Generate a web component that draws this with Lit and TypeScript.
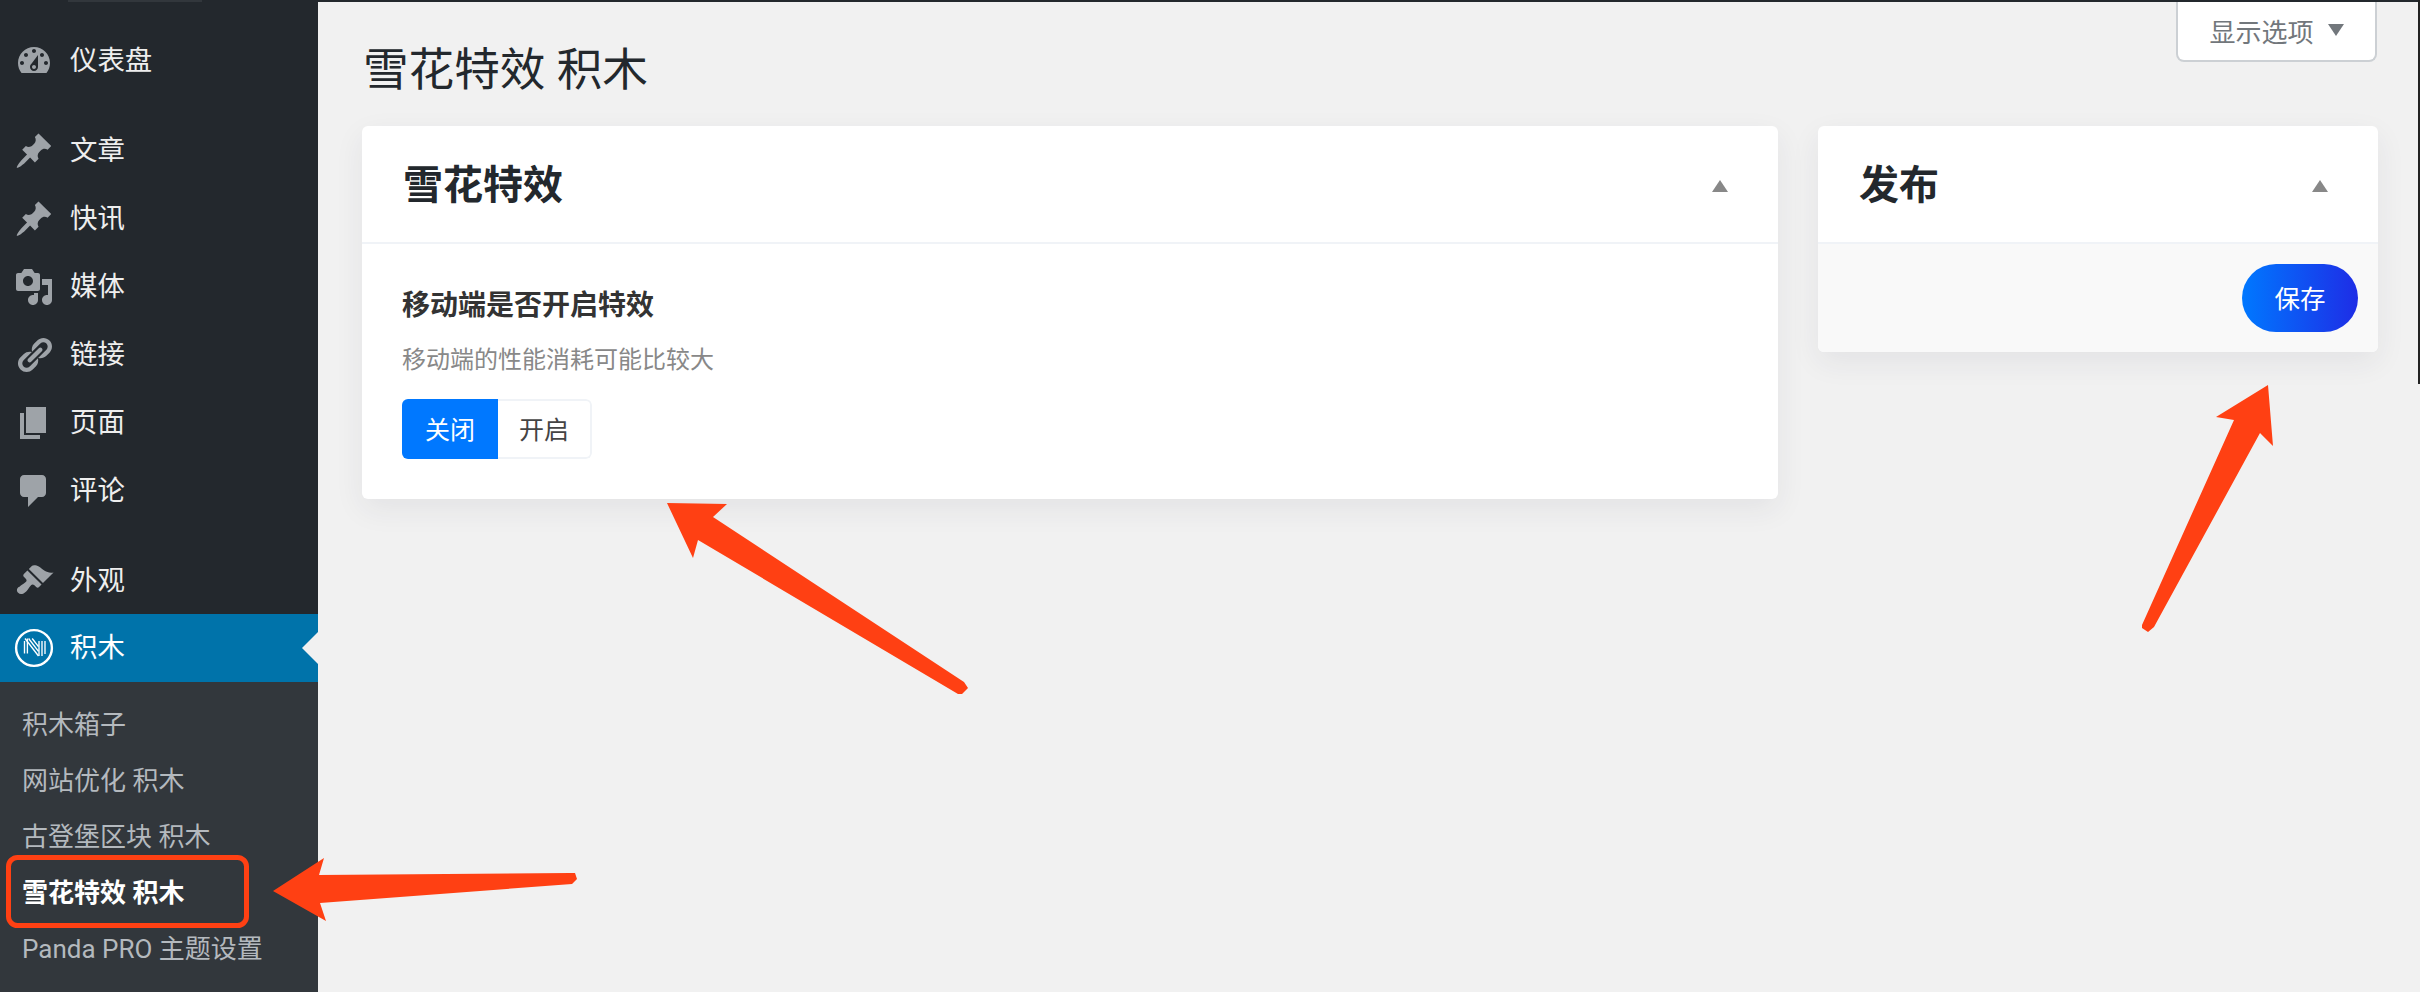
import { LitElement, html, css, svg } from "lit";
import { customElement } from "lit/decorators.js";

const ICONS: Record<string, string> = {
  dashboard: "M3.76 16h12.48c1.1-1.37 1.76-3.11 1.76-5 0-4.42-3.58-8-8-8s-8 3.58-8 8c0 1.89.66 3.63 1.76 5zM10 4c.55 0 1 .45 1 1s-.45 1-1 1-1-.45-1-1 .45-1 1-1zM6 6c.55 0 1 .45 1 1s-.45 1-1 1-1-.45-1-1 .45-1 1-1zm8 0c.55 0 1 .45 1 1s-.45 1-1 1-1-.45-1-1 .45-1 1-1zm-5.37 5.55L12 7v6c0 1.1-.9 2-2 2s-2-.9-2-2c0-.57.24-1.08.63-1.45zM4 10c.55 0 1 .45 1 1s-.45 1-1 1-1-.45-1-1 .45-1 1-1zm12 0c.55 0 1 .45 1 1s-.45 1-1 1-1-.45-1-1 .45-1 1-1zm-5 3c0-.55-.45-1-1-1s-1 .45-1 1 .45 1 1 1 1-.45 1-1z",
  pin: "M10.44 3.02l1.82-1.82 6.36 6.35-1.83 1.82c-1.05-.68-2.48-.57-3.41.36l-.75.75c-.92.93-1.04 2.35-.35 3.41l-1.83 1.82-2.41-2.41-2.8 2.79c-.42.42-3.38 2.71-3.8 2.29s1.86-3.39 2.28-3.81l2.79-2.79L4.1 9.36l1.83-1.82c1.05.69 2.48.57 3.4-.36l.75-.75c.93-.92 1.05-2.35.36-3.41z",
  media: "M13 11V4c0-.55-.45-1-1-1h-1.67L9 1H5L3.67 3H2c-.55 0-1 .45-1 1v7c0 .55.45 1 1 1h10c.55 0 1-.45 1-1zM7 4.5c1.38 0 2.5 1.12 2.5 2.5S8.38 9.5 7 9.5 4.5 8.38 4.5 7 5.62 4.5 7 4.5zM14 6h5v10.5c0 1.38-1.12 2.5-2.5 2.5S14 17.88 14 16.5s1.12-2.5 2.5-2.5c.17 0 .34.02.5.05V9h-3V6zm-4 8.05V13h2v3.5c0 1.38-1.12 2.5-2.5 2.5S7 17.88 7 16.5 8.12 14 9.5 14c.17 0 .34.02.5.05z",
  links: "M17.74 2.76c1.68 1.69 1.68 4.41 0 6.1l-1.53 1.52c-1.12 1.12-2.7 1.47-4.14 1.09l2.62-2.61.76-.77.76-.76c.84-.84.84-2.2 0-3.04-.84-.85-2.2-.85-3.04 0l-.77.76-3.38 3.38c-.37-1.44-.02-3.02 1.1-4.14l1.52-1.53c1.69-1.68 4.42-1.68 6.1 0zM8.59 13.43l5.34-5.34c.42-.42.42-1.1 0-1.52-.44-.43-1.13-.39-1.53 0l-5.33 5.34c-.42.42-.42 1.1 0 1.52.44.43 1.13.39 1.52 0zm-.76 2.29l4.14-4.15c.38 1.44.03 3.02-1.09 4.14l-1.52 1.53c-1.69 1.68-4.41 1.68-6.1 0-1.68-1.68-1.68-4.42 0-6.1l1.53-1.52c1.12-1.12 2.7-1.47 4.14-1.1l-4.14 4.15c-.85.84-.85 2.2 0 3.05.84.84 2.2.84 3.04 0z",
  page: "M6 15V2h10v13H6zm-1 1h8v2H3V5h2v11z",
  comments: "M5 2h9c1.1 0 2 .9 2 2v7c0 1.1-.9 2-2 2h-2l-5 5v-5H5c-1.1 0-2-.9-2-2V4c0-1.1.9-2 2-2z",
  appearance: "M14.48 11.06L7.41 3.99l1.5-1.5c.5-.56 2.3-.47 3.51.32 1.21.8 1.43 1.28 2.91 2.1 1.18.64 2.45 1.26 4.45.85zm-.71.71L6.7 4.7 4.93 6.47c-.39.39-.39 1.02 0 1.41l1.06 1.06c.39.39.39 1.03 0 1.42-.6.6-1.43 1.11-2.21 1.69-.35.26-.7.53-1.01.84C1.43 13.23 1 14.87 2.06 15.93s2.7.63 4.04-.71c.31-.31.58-.66.84-1.01.58-.78 1.09-1.61 1.69-2.21.39-.39 1.03-.39 1.42 0l1.06 1.06c.39.39 1.02.39 1.41 0z",
};

type Item = { label: string; icon: string };
const GROUP_A: Item[] = [{ label: "仪表盘", icon: "dashboard" }];
const GROUP_B: Item[] = [
  { label: "文章", icon: "pin" },
  { label: "快讯", icon: "pin" },
  { label: "媒体", icon: "media" },
  { label: "链接", icon: "links" },
  { label: "页面", icon: "page" },
  { label: "评论", icon: "comments" },
];
const GROUP_C: Item[] = [{ label: "外观", icon: "appearance" }];
const SUB = ["积木箱子", "网站优化 积木", "古登堡区块 积木", "雪花特效 积木", "Panda PRO 主题设置"];

const dash = (name: string) =>
  html`<svg class="ico" viewBox="0 0 20 20" aria-hidden="true"><path d=${ICONS[name]}></path></svg>`;

const logo = html`<svg class="ico" viewBox="0 0 40 40" aria-hidden="true">
  <circle cx="20" cy="20" r="17.9" fill="none" stroke="#fff" stroke-width="2.4"></circle>
  <g fill="none" stroke="#fff" stroke-width="1.35">
    <path d="M10.5 13v12.5M13.4 10.5v15"></path>
    <path d="M11 10.5l13.5 17.5M14.6 10.5l9.9 12.8M18.2 10.5l6.3 8.2"></path>
    <path d="M25 13v15M28 13v15M31 13v13"></path>
  </g>
</svg>`;

const arrows = svg`
  <polygon points="273,891 324,858 319,875 570,873 575,873 577,879 572,884 320,903 326,921"></polygon>
  <polygon points="667,503 727,504 713,517 964,682 968,688 962,694 958,694 698,540 693,558"></polygon>
  <polygon points="2268,385 2273,446 2260,433 2154,627 2148,632 2142,628 2142,625 2234,420 2216,417"></polygon>
  <rect x="8.5" y="857.5" width="238" height="68" rx="9" fill="none" stroke="#ff4013" stroke-width="5"></rect>
`;

@customElement("app-root")
export class AppRoot extends LitElement {
  static styles = css`
    :host {
      display: block;
      position: relative;
      width: 2420px;
      height: 992px;
      overflow: hidden;
      background: #f1f1f1;
      font-family: Roboto, "Noto Sans CJK SC", sans-serif;
      color: #23282d;
    }
    .layout { display: flex; height: 100%; }

    .side {
      width: 318px;
      flex: none;
      display: flex;
      flex-direction: column;
      background: #23282d;
      position: relative;
    }
    .side-top {
      width: 134px;
      height: 2px;
      margin-left: 68px;
      background: #32373c;
    }
    .menu { display: flex; flex-direction: column; }
    .m1 { margin-top: 25px; }
    .m2 { margin-top: 22px; }
    .m3 { margin-top: 22px; }
    .m3 .item { height: 67px; }
    .item {
      height: 68px;
      display: flex;
      align-items: center;
      color: #eee;
      font-size: 27.4px;
      line-height: 68px;
    }
    .item .ico {
      width: 40px;
      height: 40px;
      margin-left: 14px;
      margin-right: 16px;
      fill: #9ea3a8;
      flex: none;
    }
    .item.active {
      background: #0073aa;
      color: #fff;
      position: relative;
    }
    .item.active::after {
      content: "";
      position: absolute;
      right: 0;
      top: 18px;
      border-style: solid;
      border-width: 16px 16px 16px 0;
      border-color: transparent #f1f1f1 transparent transparent;
    }
    .sub {
      flex: 1;
      background: #32373c;
      padding-top: 15px;
      display: flex;
      flex-direction: column;
    }
    .sub a {
      height: 56px;
      line-height: 56px;
      padding-left: 22px;
      font-size: 26px;
      color: #b4b9be;
      white-space: nowrap;
    }
    .sub a.current { color: #fff; font-weight: 700; }

    .main {
      flex: 1;
      min-width: 0;
      border-top: 2px solid #23282d;
      padding: 0 42px 0 44px;
    }
    .head {
      display: flex;
      justify-content: space-between;
      align-items: flex-start;
      height: 124px;
    }
    h1 {
      margin: 41px 0 0 1px;
      font-size: 45.6px;
      line-height: 56px;
      font-weight: 400;
      color: #23282d;
    }
    .screen-opt {
      width: 201px;
      height: 60px;
      margin-right: 1px;
      box-sizing: border-box;
      display: flex;
      align-items: center;
      justify-content: center;
      gap: 14px;
      padding: 0 0 2px 0;
      background: #fff;
      border: 2px solid #ccd0d4;
      border-top: 0;
      border-radius: 0 0 8px 8px;
      color: #72777c;
      font-size: 26px;
    }
    .screen-opt i {
      width: 0;
      height: 0;
      border-style: solid;
      border-width: 12px 8.5px 0 8.5px;
      border-color: #72777c transparent transparent transparent;
    }
    .cols {
      display: grid;
      grid-template-columns: 1fr 560px;
      gap: 40px;
      align-items: start;
    }
    .card {
      background: #fff;
      border-radius: 6px;
      box-shadow: 0 10px 30px rgba(38, 45, 70, 0.07);
      overflow: hidden;
    }
    .card-head {
      height: 116px;
      box-sizing: content-box;
      border-bottom: 2px solid #f0f3f7;
      display: flex;
      align-items: center;
      justify-content: space-between;
      padding: 0 50px 0 41px;
    }
    .card-head h2 {
      margin: 0;
      padding-top: 3px;
      font-size: 40px;
      line-height: 56px;
      font-weight: 700;
      color: #23282d;
    }
    .tri {
      width: 0;
      height: 0;
      margin-top: 4px;
      border-style: solid;
      border-width: 0 8px 12px 8px;
      border-color: transparent transparent #888 transparent;
    }
    .card-body { padding: 42px 40px 0; height: 255px; box-sizing: border-box; }
    .label {
      font-size: 28px;
      line-height: 40px;
      font-weight: 700;
      color: #333;
    }
    .desc {
      margin-top: 14px;
      font-size: 24px;
      line-height: 40px;
      color: #888;
    }
    .seg {
      margin-top: 19px;
      display: inline-flex;
      height: 60px;
      border-radius: 6px;
      overflow: hidden;
      font-size: 25px;
    }
    .seg span {
      display: flex;
      align-items: center;
      justify-content: center;
      box-sizing: border-box;
      padding-bottom: 2px;
    }
    .seg .on { width: 96px; background: #0078ff; color: #fff; }
    .seg .off {
      width: 94px;
      color: #444;
      background: #fff;
      border: 2px solid #f0f3f7;
      border-left: 0;
      border-radius: 0 6px 6px 0;
    }
    .pub-foot {
      height: 108px;
      box-sizing: border-box;
      background: #f9f9f9;
      padding: 20px;
      display: flex;
      justify-content: flex-end;
    }
    .save {
      width: 116px;
      height: 68px;
      box-sizing: border-box;
      padding-bottom: 3px;
      border-radius: 34px;
      background: linear-gradient(90deg, #0078ff, #1e2de6);
      color: #fff;
      font-size: 25.5px;
      display: flex;
      align-items: center;
      justify-content: center;
    }
    .edge {
      position: absolute;
      right: 0;
      top: 0;
      width: 2px;
      height: 384px;
      background: #222;
    }
    .overlay {
      position: absolute;
      inset: 0;
      width: 2420px;
      height: 992px;
      pointer-events: none;
      fill: #ff4013;
    }
  `;

  private renderItem(it: Item) {
    return html`<div class="item">${dash(it.icon)}<span>${it.label}</span></div>`;
  }

  render() {
    return html`
      <div class="layout">
        <nav class="side">
          <div class="side-top"></div>
          <div class="menu m1">${GROUP_A.map((i) => this.renderItem(i))}</div>
          <div class="menu m2">${GROUP_B.map((i) => this.renderItem(i))}</div>
          <div class="menu m3">${GROUP_C.map((i) => this.renderItem(i))}</div>
          <div class="item active">${logo}<span>积木</span></div>
          <div class="sub">
            ${SUB.map((s, i) => html`<a class=${i === 3 ? "current" : ""}>${s}</a>`)}
          </div>
        </nav>
        <main class="main">
          <div class="head">
            <h1>雪花特效 积木</h1>
            <div class="screen-opt"><span>显示选项</span><i></i></div>
          </div>
          <div class="cols">
            <section class="card">
              <div class="card-head"><h2>雪花特效</h2><div class="tri"></div></div>
              <div class="card-body">
                <div class="label">移动端是否开启特效</div>
                <div class="desc">移动端的性能消耗可能比较大</div>
                <div class="seg"><span class="on">关闭</span><span class="off">开启</span></div>
              </div>
            </section>
            <section class="card">
              <div class="card-head"><h2>发布</h2><div class="tri"></div></div>
              <div class="pub-foot"><div class="save">保存</div></div>
            </section>
          </div>
        </main>
      </div>
      <div class="edge"></div>
      <svg class="overlay" viewBox="0 0 2420 992" aria-hidden="true">${arrows}</svg>
    `;
  }
}
